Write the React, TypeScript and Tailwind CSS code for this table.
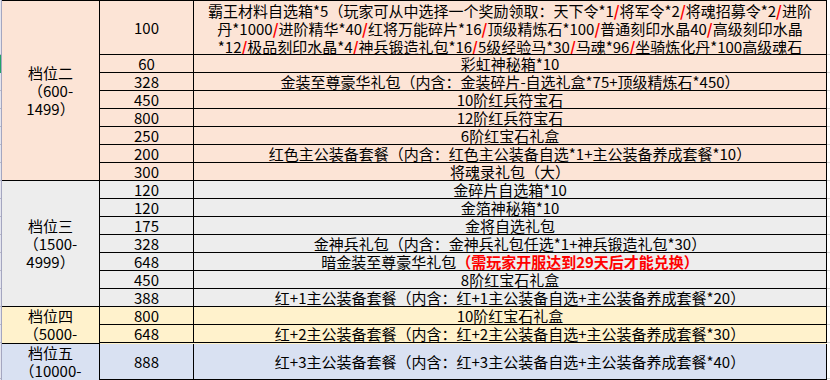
import React from 'react';

type Row = { amount: string; h: string; content: React.ReactNode };
type Group = { bg: string; tier: string[]; rows: Row[] };

const FONT = '"Noto Sans CJK SC", "Noto Sans", sans-serif';

function RedSlashes({ text }: { text: string }) {
  const parts = text.split('/');
  return (
    <>
      {parts.map((p, i) => (
        <React.Fragment key={i}>
          {i > 0 && <span className="font-bold text-[#ff0000]">/</span>}
          {p}
        </React.Fragment>
      ))}
    </>
  );
}

const firstRow = (
  <div className="flex flex-col items-center leading-[18px] pt-[3px]">
    <span><RedSlashes text="霸王材料自选箱*5（玩家可从中选择一个奖励领取：天下令*1/将军令*2/将魂招募令*2/进阶" /></span>
    <span><RedSlashes text="丹*1000/进阶精华*40/红将万能碎片*16/顶级精炼石*100/普通刻印水晶40/高级刻印水晶" /></span>
    <span><RedSlashes text="*12/极品刻印水晶*4/神兵锻造礼包*16/5级经验马*30/马魂*96/坐骑炼化丹*100高级魂石" /></span>
  </div>
);

const groups: Group[] = [
  {
    bg: 'bg-[#fce4d6]',
    tier: ['档位二', '（600-', '1499）'],
    rows: [
      { amount: '100', h: 'h-[54px]', content: firstRow },
      { amount: '60', h: 'h-[18px]', content: '彩虹神秘箱*10' },
      { amount: '328', h: 'h-[18px]', content: '金装至尊豪华礼包（内含：金装碎片-自选礼盒*75+顶级精炼石*450）' },
      { amount: '450', h: 'h-[18px]', content: '10阶红兵符宝石' },
      { amount: '800', h: 'h-[18px]', content: '12阶红兵符宝石' },
      { amount: '250', h: 'h-[18px]', content: '6阶红宝石礼盒' },
      { amount: '200', h: 'h-[18px]', content: '红色主公装备套餐（内含：红色主公装备自选*1+主公装备养成套餐*10）' },
      { amount: '300', h: 'h-[18px]', content: '将魂录礼包（大）' },
    ],
  },
  {
    bg: 'bg-[#ededed]',
    tier: ['档位三', '（1500-', '4999）'],
    rows: [
      { amount: '120', h: 'h-[18px]', content: '金碎片自选箱*10' },
      { amount: '120', h: 'h-[18px]', content: '金箔神秘箱*10' },
      { amount: '175', h: 'h-[18px]', content: '金将自选礼包' },
      { amount: '328', h: 'h-[18px]', content: '金神兵礼包（内含：金神兵礼包任选*1+神兵锻造礼包*30）' },
      {
        amount: '648',
        h: 'h-[18px]',
        content: (
          <span>
            暗金装至尊豪华礼包<span className="font-bold text-[#ff0000]">（需玩家开服达到29天后才能兑换）</span>
          </span>
        ),
      },
      { amount: '450', h: 'h-[18px]', content: '8阶红宝石礼盒' },
      { amount: '388', h: 'h-[18px]', content: '红+1主公装备套餐（内含：红+1主公装备自选+主公装备养成套餐*20）' },
    ],
  },
  {
    bg: 'bg-[#fff2cc]',
    tier: ['档位四', '（5000-'],
    rows: [
      { amount: '800', h: 'h-[18px]', content: '10阶红宝石礼盒' },
      { amount: '648', h: 'h-[18px]', content: '红+2主公装备套餐（内含：红+2主公装备自选+主公装备养成套餐*30）' },
    ],
  },
  {
    bg: 'bg-[#d9e1f2]',
    tier: ['档位五', '（10000-'],
    rows: [
      { amount: '888', h: 'h-[36px]', content: '红+3主公装备套餐（内含：红+3主公装备自选+主公装备养成套餐*40）' },
    ],
  },
];

const allRows = groups.flatMap((g) => g.rows);

export default function App() {
  return (
    <div
      className="w-[830px] h-[380px] bg-white overflow-hidden flex text-[15px] text-black"
      style={{ fontFamily: FONT }}>
      {/* row header remnant */}
      <div className="w-[2px] flex flex-col bg-[#e4e4ee] border-r border-[#a4a6c0]">
        <div className="h-[1px]" />
        {allRows.map((r, i) => (
          <div
            key={i}
            className={`${r.h} border-b ${i === 1 ? 'bg-[#21a366] border-[#21a366]' : 'border-[#b8b8c8]'}`}
          />
        ))}
      </div>

      {/* table */}
      <div className="w-[825px] flex flex-col border-t border-black">
        {groups.map((g, gi) => (
          <div key={gi} className={`flex ${g.bg}`}>
            <div className="w-[98px] shrink-0 border-r border-b border-black flex flex-col items-center justify-center text-center leading-[18px] overflow-hidden">
              {g.tier.map((t) => (
                <span key={t} className="whitespace-nowrap">{t}</span>
              ))}
            </div>
            <div className="flex-1 flex flex-col">
              {g.rows.map((r, ri) => (
                <div key={ri} className={`flex ${r.h}`}>
                  <div className="w-[94px] shrink-0 border-r border-b border-black flex items-center justify-center leading-[17px]">
                    {r.amount}
                  </div>
                  <div className="flex-1 border-r border-b border-black flex items-center justify-center whitespace-nowrap leading-[17px] overflow-hidden">
                    {r.content}
                  </div>
                </div>
              ))}
            </div>
          </div>
        ))}
      </div>

      {/* sheet gridlines past the table */}
      <div className="flex-1 flex flex-col">
        <div className="h-[1px]" />
        {allRows.map((r, i) => (
          <div key={i} className={`${r.h} border-b border-[#d4d4d4]`} />
        ))}
      </div>
    </div>
  );
}
